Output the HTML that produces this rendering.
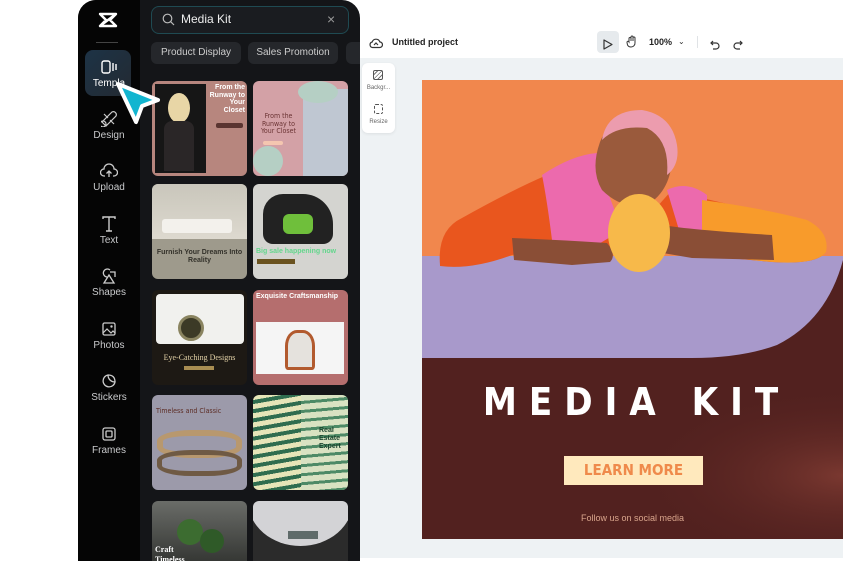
<!DOCTYPE html>
<html><head><meta charset="utf-8"><style>
*{margin:0;padding:0;box-sizing:border-box}
body{width:843px;height:561px;background:#fff;position:relative;overflow:hidden;font-family:"Liberation Sans",sans-serif}
.abs{position:absolute}
.panel{left:78px;top:0;width:282px;height:561px;background:#141518;border-radius:18px 18px 0 0;overflow:hidden}
.side{left:0;top:0;width:62px;height:561px;background:#050505}
.nav{position:absolute;left:0;width:62px;text-align:center;color:#c9cacc;font-size:10px}
.nav svg{display:block;margin:0 auto 3px}
.card{position:absolute;width:95px;height:95px;border-radius:6px;overflow:hidden}
.c1{left:74px}.c2{left:175px}
</style></head><body>
<div class="abs" style="left:360px;top:58px;width:483px;height:500px;background:#eef2f4"></div>
<div class="abs" style="left:369px;top:36px"><svg width="14" height="12" viewBox="0 0 14 12"><path d="M3.5 10.5h7a2.8 2.8 0 0 0 .3-5.6A4 4 0 0 0 3.2 5a2.8 2.8 0 0 0 .3 5.5zM5 8l2-2 2 2" fill="none" stroke="#333" stroke-width="1.2"/></svg></div>
<div class="abs" style="left:392px;top:37px;font-size:9px;color:#222;font-weight:bold">Untitled project</div>
<div class="abs" style="left:597px;top:31px;width:22px;height:22px;background:#e6eaed;border-radius:4px"></div>
<div class="abs" style="left:603px;top:37px"><svg width="10" height="11" viewBox="0 0 10 11"><path d="M1 1l8 4.5L1 10z" fill="none" stroke="#333" stroke-width="1.2" stroke-linejoin="round"/></svg></div>
<div class="abs" style="left:626px;top:35px"><svg width="12" height="13" viewBox="0 0 12 13"><path d="M3 7V3.5a1 1 0 0 1 2 0V6V2a1 1 0 0 1 2 0v4V3a1 1 0 0 1 2 0v4.5a4 4 0 0 1-4 4.5 4 4 0 0 1-3.5-2L1 7.5a1 1 0 0 1 1.8-.8z" fill="none" stroke="#333" stroke-width="1"/></svg></div>
<div class="abs" style="left:649px;top:37px;font-size:9px;color:#222;font-weight:bold">100%</div>
<div class="abs" style="left:678px;top:37px;font-size:8px;color:#333">&#8964;</div>
<div class="abs" style="left:697px;top:36px;width:1px;height:12px;background:#e0e3e6"></div>
<div class="abs" style="left:710px;top:37px"><svg width="10" height="10" viewBox="0 0 10 10"><path d="M3 1L1 3l2 2M1 3h5a3 3 0 0 1 0 6H3" fill="none" stroke="#333" stroke-width="1.2"/></svg></div>
<div class="abs" style="left:733px;top:37px"><svg width="10" height="10" viewBox="0 0 10 10"><path d="M7 1l2 2-2 2M9 3H4a3 3 0 0 0 0 6h3" fill="none" stroke="#333" stroke-width="1.2"/></svg></div>
<div class="abs" style="left:362px;top:63px;width:33px;height:70px;background:#fff;border-radius:6px;box-shadow:0 1px 3px rgba(0,0,0,.08)"></div>
<div class="abs" style="left:373px;top:70px;width:10px;height:10px;border:1.2px solid #555;border-radius:2px;background:repeating-linear-gradient(135deg,#fff 0 2px,#777 2px 3px)"></div>
<div class="abs" style="left:363px;top:85px;width:31px;text-align:center;font-size:6px;color:#666">Backgr...</div>
<div class="abs" style="left:374px;top:104px;width:9px;height:10px;border:1.2px dashed #555;border-radius:2px"></div>
<div class="abs" style="left:363px;top:119px;width:31px;text-align:center;font-size:6px;color:#666">Resize</div>
<div class="abs" style="left:422px;top:80px;width:421px;height:459px;overflow:hidden;background:#52211f">
 <div class="abs" style="left:0;top:0;width:421px;height:176px;background:#f1874d"></div>
 <svg class="abs" style="left:0;top:0" width="421" height="459" viewBox="0 0 421 459">
  <defs><radialGradient id="g" cx="1" cy="0.65" r="0.5"><stop offset="0" stop-color="#7a3830"/><stop offset="1" stop-color="#52211f" stop-opacity="0"/></radialGradient></defs>
  <rect x="0" y="278" width="421" height="181" fill="url(#g)"/>
  <path d="M0 176H421V180Q405 240 355 265Q320 278 270 278H0z" fill="#a899cb"/>
  <path d="M18 185Q15 150 40 138Q90 110 125 95L160 80L175 120L210 155L250 110L280 118Q330 130 380 140Q405 150 404 170Q400 185 350 182L240 172L190 170L150 165L90 175Q50 190 18 186z" fill="#e9561e"/>
  <path d="M120 95Q150 75 175 73L185 110L200 150L175 165L130 160Q125 120 120 95z" fill="#ec6aad"/>
  <path d="M245 110Q265 100 285 115L285 150L260 160z" fill="#ec6aad"/>
  <path d="M280 120Q340 128 385 140Q408 152 404 172Q395 185 350 182L280 175z" fill="#f89b2b"/>
  <path d="M90 158Q140 160 185 163Q195 175 188 182L150 185L92 180z" fill="#8a4e36"/>
  <path d="M240 145Q270 150 350 155L352 180L270 178L235 172z" fill="#8a4e36"/>
  <path d="M178 62Q185 42 215 40Q245 45 250 75Q250 110 225 125Q200 130 180 110Q168 90 178 62z" fill="#9a5a3c"/>
  <path d="M180 60Q185 30 220 30Q250 35 255 65Q258 85 245 95Q248 60 225 48Q195 45 180 60z" fill="#ec9cae"/>
  <ellipse cx="217" cy="153" rx="31" ry="39" fill="#f7b94a"/>
 </svg>
 <div class="abs" style="left:0;top:300px;width:421px;text-align:center;color:#fff;font-size:38px;font-weight:bold;letter-spacing:12px;font-family:'DejaVu Sans Condensed','Liberation Sans',sans-serif;padding-left:8px">MEDIA KIT</div>
 <div class="abs" style="left:142px;top:376px;width:139px;height:29px;background:#ffe9bd;text-align:center;line-height:29px;color:#ef8a4b;font-weight:bold;font-size:15px;font-family:'DejaVu Sans Condensed',sans-serif">LEARN MORE</div>
 <div class="abs" style="left:0;top:433px;width:421px;text-align:center;color:#d9a58c;font-size:9px">Follow us on social media</div>
</div>
<div class="abs panel">
 <div class="abs side"></div>
 <svg class="abs" style="left:20px;top:12px" width="20" height="16" viewBox="0 0 20 16"><path d="M2 2h16L2 14h16M2 2l6 6M18 2l-6 6M2 14l6-6M18 14l-6-6" fill="none" stroke="#fff" stroke-width="2.4" stroke-linecap="round" stroke-linejoin="round"/></svg>
 <div class="abs" style="left:18px;top:42px;width:22px;height:1px;background:#444"></div>
 <div class="abs" style="left:7px;top:50px;width:46px;height:46px;border-radius:8px;background:linear-gradient(135deg,#1d3346,#232a32)"></div>
 <div class="nav" style="top:59px;color:#fff"><svg width="18" height="16" viewBox="0 0 18 16"><rect x="2" y="2" width="8" height="12" rx="2" fill="none" stroke="#fff" stroke-width="1.4"/><path d="M13 4v8M16 5v6" stroke="#fff" stroke-width="1.4"/></svg>Templa</div>
 <div class="nav" style="top:111px"><svg width="16" height="16" viewBox="0 0 16 16"><path d="M3 3l4 4M9 9l4 4M5 13a3 3 0 1 1 0-.1M11 1a3 3 0 0 1 4 4L5 15 1 11z" fill="none" stroke="#ccc" stroke-width="1.2"/></svg>Design</div>
 <div class="nav" style="top:163px"><svg width="18" height="16" viewBox="0 0 18 16"><path d="M5 13H4a3.5 3.5 0 0 1 0-7A5 5 0 0 1 14 6a3.5 3.5 0 0 1 0 7h-1M9 14V8M6.5 10.5 9 8l2.5 2.5" fill="none" stroke="#ccc" stroke-width="1.3"/></svg>Upload</div>
 <div class="nav" style="top:215px"><svg width="16" height="17" viewBox="0 0 16 17"><path d="M2 4V2h12v2M8 2v14M5 16h6" fill="none" stroke="#ccc" stroke-width="1.4"/></svg>Text</div>
 <div class="nav" style="top:268px"><svg width="16" height="16" viewBox="0 0 16 16"><path d="M6 9a4 4 0 1 1 3-7M9 4l5 0 0 5M8 7l-5 8h10z" fill="none" stroke="#ccc" stroke-width="1.3"/></svg>Shapes</div>
 <div class="nav" style="top:321px"><svg width="16" height="16" viewBox="0 0 16 16"><rect x="2" y="2" width="12" height="12" rx="1.5" fill="none" stroke="#ccc" stroke-width="1.3"/><path d="M2 12l4-4 4 4 2-2 2 2" fill="none" stroke="#ccc" stroke-width="1.2"/><circle cx="10.5" cy="5.5" r="1.2" fill="#ccc"/></svg>Photos</div>
 <div class="nav" style="top:373px"><svg width="16" height="16" viewBox="0 0 16 16"><path d="M14 9A6 6 0 1 1 7 2c0 4 3 7 7 7zM7 2q7 0 7 7" fill="none" stroke="#ccc" stroke-width="1.3"/></svg>Stickers</div>
 <div class="nav" style="top:426px"><svg width="16" height="16" viewBox="0 0 16 16"><rect x="2" y="2" width="12" height="12" rx="2" fill="none" stroke="#ccc" stroke-width="1.3"/><rect x="5" y="5" width="6" height="6" rx="1" fill="none" stroke="#ccc" stroke-width="1.3"/></svg>Frames</div>
 <div class="abs" style="left:73px;top:6px;width:198px;height:28px;border:1px solid #1f4a52;border-radius:8px;background:#1a1c20"></div>
 <svg class="abs" style="left:84px;top:13px" width="13" height="13" viewBox="0 0 13 13"><circle cx="5.5" cy="5.5" r="4.3" fill="none" stroke="#bbb" stroke-width="1.2"/><path d="M8.7 8.7L12 12" stroke="#bbb" stroke-width="1.2"/></svg>
 <div class="abs" style="left:103px;top:12px;color:#eee;font-size:12px">Media Kit</div>
 <div class="abs" style="left:249px;top:11px;color:#999;font-size:14px">&#215;</div>
 <div class="abs" style="left:73px;top:42px;width:90px;height:22px;border-radius:6px;background:#25272b;color:#ccc;font-size:10px;text-align:center;line-height:22px">Product Display</div>
 <div class="abs" style="left:170px;top:42px;width:90px;height:22px;border-radius:6px;background:#25272b;color:#ccc;font-size:10px;text-align:center;line-height:22px">Sales Promotion</div>
 <div class="abs" style="left:268px;top:42px;width:14px;height:22px;border-radius:6px 0 0 6px;background:#25272b"></div>
 <div class="card c1" style="top:81px;background:#b7867e">
  <div class="abs" style="left:3px;top:3px;width:51px;height:89px;background:#161616"></div>
  <div class="abs" style="left:16px;top:12px;width:22px;height:30px;border-radius:50%;background:#e8d6a6"></div>
  <div class="abs" style="left:12px;top:40px;width:30px;height:50px;border-radius:8px 8px 0 0;background:#2a2627"></div>
  <div class="abs" style="left:56px;top:3px;width:37px;color:#fff;font-size:7px;font-weight:bold;text-align:right;line-height:7.5px">From the Runway to Your Closet</div>
  <div class="abs" style="left:64px;top:42px;width:27px;height:5px;background:#5a3430;border-radius:2px"></div>
 </div>
 <div class="card c2" style="top:81px;background:#d3a1a6">
  <div class="abs" style="left:50px;top:8px;width:45px;height:87px;background:#bfc7d2;border-radius:10px 0 0 0"></div>
  <div class="abs" style="left:45px;top:0;width:40px;height:22px;background:#b5cfc4;border-radius:50%"></div>
  <div class="abs" style="left:3px;top:32px;width:45px;color:#6b3434;font-size:7px;text-align:center;line-height:7.5px;font-family:'DejaVu Sans Condensed',sans-serif">From the Runway to Your Closet</div>
  <div class="abs" style="left:10px;top:60px;width:20px;height:4px;background:#f4c6b0;border-radius:2px"></div>
  <div class="abs" style="left:0;top:65px;width:30px;height:30px;background:#b5cfc4;border-radius:50%"></div>
 </div>
 <div class="card c1" style="top:184px;background:#9e9a8c">
  <div class="abs" style="left:0;top:0;width:95px;height:55px;background:linear-gradient(#c9c6bb,#ddd9cf)"></div>
  <div class="abs" style="left:10px;top:35px;width:70px;height:14px;background:#f3f1ec;border-radius:3px"></div>
  <div class="abs" style="left:0;top:65px;width:95px;text-align:center;color:#33312a;font-size:7px;font-weight:bold;line-height:8px">Furnish Your Dreams Into Reality</div>
 </div>
 <div class="card c2" style="top:184px;background:#d4d4d0">
  <div class="abs" style="left:10px;top:10px;width:70px;height:50px;background:#222;border-radius:20px 30px 10px 10px"></div>
  <div class="abs" style="left:30px;top:30px;width:30px;height:20px;background:#6fbf3b;border-radius:6px"></div>
  <div class="abs" style="left:3px;top:64px;color:#63d68c;font-size:7px;font-weight:bold">Big sale happening now</div>
  <div class="abs" style="left:4px;top:75px;width:38px;height:5px;background:#6a5320"></div>
 </div>
 <div class="card c1" style="top:290px;background:#1d1914">
  <div class="abs" style="left:4px;top:4px;width:88px;height:50px;background:#f1f1ee;border-radius:4px"></div>
  <div class="abs" style="left:26px;top:25px;width:26px;height:26px;border-radius:50%;background:#3c3a26;border:3px solid #8a8460"></div>
  <div class="abs" style="left:0;top:63px;width:95px;text-align:center;color:#e4d3a8;font-size:8px;font-family:'Liberation Serif',serif">Eye-Catching Designs</div>
  <div class="abs" style="left:32px;top:76px;width:30px;height:4px;background:#a88d52"></div>
 </div>
 <div class="card c2" style="top:290px;background:#b56e6e">
  <div class="abs" style="left:3px;top:3px;color:#fff;font-size:7px;font-weight:bold;white-space:nowrap">Exquisite Craftsmanship</div>
  <div class="abs" style="left:3px;top:32px;width:88px;height:52px;background:#f5f5f5"></div>
  <div class="abs" style="left:32px;top:40px;width:30px;height:40px;border-radius:40% 40% 10% 10%;background:#e5e2dd;border:3px solid #b25a2e"></div>
 </div>
 <div class="card c1" style="top:395px;background:#9c9aaa">
  <div class="abs" style="left:4px;top:12px;color:#5c2c24;font-size:7px;font-family:'DejaVu Sans Condensed',sans-serif">Timeless and Classic</div>
  <div class="abs" style="left:5px;top:35px;width:85px;height:28px;border-radius:40%;border:6px solid #b8986e"></div>
  <div class="abs" style="left:5px;top:55px;width:85px;height:26px;border-radius:40%;border:5px solid #6f5a44"></div>
 </div>
 <div class="card c2" style="top:395px;background:repeating-linear-gradient(170deg,#e6e5b8 0 5px,#2f6d4f 5px 9px)">
  <div class="abs" style="left:48px;top:0;width:47px;height:95px;background:repeating-linear-gradient(175deg,#d9e2c2 0 6px,#4d8a66 6px 9px)"></div>
  <div class="abs" style="left:66px;top:32px;width:28px;color:#1d4530;font-size:7px;font-weight:bold;line-height:8px">Real Estate Expert</div>
 </div>
 <div class="card c1" style="top:501px;height:70px;background:linear-gradient(#6a6c68,#2d2f2c)">
  <div class="abs" style="left:25px;top:18px;width:26px;height:26px;border-radius:50%;background:#3c6c30"></div>
  <div class="abs" style="left:48px;top:28px;width:24px;height:24px;border-radius:50%;background:#2f5a28"></div>
  <div class="abs" style="left:3px;top:44px;color:#fff;font-size:8px;font-weight:bold;font-family:'Liberation Serif',serif;line-height:10px">Craft<br>Timeless</div>
 </div>
 <div class="card c2" style="top:501px;height:70px;background:#2b2b2b">
  <div class="abs" style="left:-5px;top:-45px;width:105px;height:90px;border-radius:50%;background:#d3d3d6"></div>
  <div class="abs" style="left:35px;top:30px;width:30px;height:8px;background:#5f6b6a"></div>
 </div>
</div>
<svg class="abs" style="left:112px;top:78px" width="52" height="52" viewBox="0 0 52 52"><path d="M6 6L46 22L30 28L24 44z" fill="#12b5d0" stroke="#fff" stroke-width="4" stroke-linejoin="round"/></svg>
</body></html>
